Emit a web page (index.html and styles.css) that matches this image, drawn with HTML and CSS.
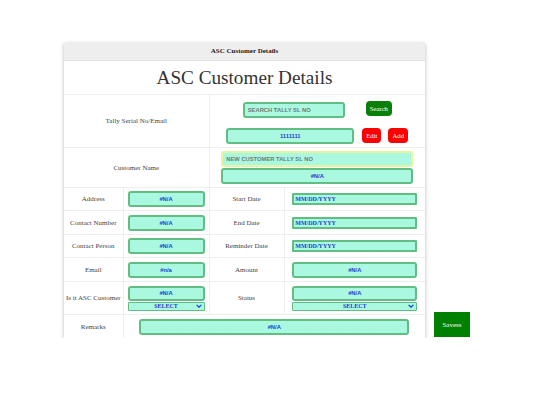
FILE: index.html
```html
<!DOCTYPE html>
<html lang="en">
<head>
<meta charset="utf-8">
<title>ASC Customer Details</title>
<link rel="stylesheet" href="styles.css">
</head>
<body>
<div class="page">
  <div class="card">
    <div class="card-head">ASC Customer Details</div>
    <h1 class="title">ASC Customer Details</h1>
    <table class="form">
      <colgroup>
        <col class="c-label">
        <col class="c-field">
        <col class="c-label2">
        <col class="c-field2">
      </colgroup>
      <tr class="r-tally">
        <td colspan="2" class="lbl">Tally Serial No/Email</td>
        <td colspan="2">
          <div class="tally">
            <div class="line">
              <input class="inp inp-search" placeholder="SEARCH TALLY SL NO">
              <button class="btn btn-green btn-search">Search</button>
            </div>
            <div class="line">
              <input class="inp inp-serial" value="1111111">
              <button class="btn btn-red btn-edit">Edit</button>
              <button class="btn btn-red btn-add">Add</button>
            </div>
          </div>
        </td>
      </tr>
      <tr class="r-cust">
        <td colspan="2" class="lbl">Customer Name</td>
        <td colspan="2">
          <div class="stack stack-cust">
            <input class="inp inp-wide inp-new" placeholder="NEW CUSTOMER TALLY SL NO">
            <input class="inp inp-wide" value="#N/A">
          </div>
        </td>
      </tr>
      <tr class="r-std">
        <td class="lbl">Address</td>
        <td class="fld"><input class="inp inp-left" value="#N/A"></td>
        <td class="lbl">Start Date</td>
        <td class="fld"><input class="date" placeholder="MM/DD/YYYY"></td>
      </tr>
      <tr class="r-std r-tall">
        <td class="lbl">Contact Number</td>
        <td class="fld"><input class="inp inp-left" value="#N/A"></td>
        <td class="lbl">End Date</td>
        <td class="fld"><input class="date" placeholder="MM/DD/YYYY"></td>
      </tr>
      <tr class="r-std">
        <td class="lbl">Contact Person</td>
        <td class="fld"><input class="inp inp-left" value="#N/A"></td>
        <td class="lbl">Reminder Date</td>
        <td class="fld"><input class="date" placeholder="MM/DD/YYYY"></td>
      </tr>
      <tr class="r-std r-tall">
        <td class="lbl">Email</td>
        <td class="fld"><input class="inp inp-left" value="#n/a"></td>
        <td class="lbl">Amount</td>
        <td class="fld"><input class="inp inp-right" value="#N/A"></td>
      </tr>
      <tr class="r-asc">
        <td class="lbl">Is it ASC Customer</td>
        <td class="fld">
          <div class="stack stack-sel">
            <input class="inp inp-left inp-short" value="#N/A">
            <span class="sel-wrap sel-left">
              <select class="sel"><option>SELECT</option></select>
              <svg class="chev" viewBox="0 0 10 6" width="6" height="4"><path d="M1 1 L5 5 L9 1" fill="none" stroke="#1a3fd0" stroke-width="2"/></svg>
            </span>
          </div>
        </td>
        <td class="lbl">Status</td>
        <td class="fld">
          <div class="stack stack-sel">
            <input class="inp inp-right inp-short" value="#N/A">
            <span class="sel-wrap sel-right">
              <select class="sel"><option>SELECT</option></select>
              <svg class="chev" viewBox="0 0 10 6" width="6" height="4"><path d="M1 1 L5 5 L9 1" fill="none" stroke="#1a3fd0" stroke-width="2"/></svg>
            </span>
          </div>
        </td>
      </tr>
      <tr class="r-std r-tall">
        <td class="lbl">Remarks</td>
        <td colspan="3" class="fld"><input class="inp inp-remarks" value="#N/A"></td>
      </tr>
    </table>
  </div>
  <button class="btn-save">Savess</button>
</div>
</body>
</html>
```

FILE: styles.css
```css
html, body {
  margin: 0;
  padding: 0;
  background: #ffffff;
}

body {
  font-family: "Liberation Serif", "Times New Roman", serif;
  color: #333333;
}

.page {
  display: flex;
  align-items: flex-end;
  gap: 9px;
  padding: 43px 0 0 64px;
}

.card {
  width: 361px;
  background: #ffffff;
  box-shadow: 0 1px 4px rgba(0, 0, 0, 0.28);
}

.card-head {
  height: 17px;
  line-height: 17px;
  background: #eeeeee;
  border-bottom: 1px solid #e2e2e2;
  text-align: center;
  font-weight: bold;
  font-size: 7px;
  color: #222222;
}

.title {
  margin: 0;
  height: 33px;
  line-height: 33px;
  text-align: center;
  font-weight: normal;
  font-size: 19.2px;
  color: #333333;
  border-bottom: 1px solid #eeeeee;
}

.form {
  width: 361px;
  table-layout: fixed;
  border-collapse: collapse;
  border-style: hidden;
}

.c-label { width: 59px; }
.c-field { width: 86px; }
.c-label2 { width: 75px; }
.c-field2 { width: 141px; }

.form td {
  border: 1px solid #eeeeee;
  padding: 0;
  vertical-align: middle;
  text-align: center;
}

.lbl {
  font-size: 7px;
  color: #444444;
  white-space: nowrap;
}

.r-tally td { height: 52px; }
.r-cust td { height: 39px; }
.r-std td { height: 22px; }
.r-tall td { height: 23px; }
.r-asc td { height: 32px; }

.tally {
  display: flex;
  flex-direction: column;
  align-items: center;
  gap: 10px;
  padding: 3px 0 0 0;
}

.line {
  display: flex;
  align-items: flex-start;
}

.inp {
  box-sizing: border-box;
  height: 16px;
  margin: 0;
  padding: 0;
  border: 2px solid #62bd83;
  border-radius: 3px;
  background: #aaf8e0;
  font-family: "Liberation Sans", Arial, sans-serif;
  font-weight: bold;
  font-size: 5.8px;
  color: #1a3fd0;
  text-align: center;
  outline: none;
  display: block;
}

.inp::placeholder {
  color: #6f7a75;
  opacity: 1;
}

.inp-search {
  width: 102px;
  text-align: left;
  padding-left: 3px;
}

.inp-serial {
  width: 128px;
}

.btn {
  box-sizing: border-box;
  height: 15px;
  margin: 0;
  padding: 0 4px;
  border: none;
  border-radius: 4px;
  font-family: "Liberation Serif", "Times New Roman", serif;
  font-size: 6.7px;
  color: #ffffff;
}

.btn-green { background: #0a800a; }
.btn-red { background: #ff0000; }

.btn-search {
  margin-left: 21px;
  margin-top: -1px;
  width: 26px;
}

.btn-edit {
  margin-left: 8px;
  width: 19px;
}

.btn-add {
  margin-left: 7px;
  width: 20px;
}

.stack {
  display: flex;
  flex-direction: column;
  align-items: center;
}

.stack-cust {
  gap: 1px;
}

.inp-wide {
  width: 192px;
}

.inp-new {
  border-color: #e3f5a0;
  text-align: left;
  padding-left: 3px;
}

.fld .inp-left { width: 77px; margin: 0 auto; }
.fld .inp-right { width: 125px; margin: 0 auto; }
.inp-short { height: 15px; }

.inp-remarks {
  width: 270px;
  margin: 0 auto;
}

.date {
  box-sizing: border-box;
  display: block;
  width: 125px;
  height: 12px;
  margin: 0 auto;
  padding: 0 0 0 1px;
  border: 2px solid #62bd83;
  border-radius: 1px;
  background: #aaf8e0;
  font-family: "Liberation Serif", "Times New Roman", serif;
  font-weight: bold;
  font-size: 6px;
  color: #1a3fd0;
  outline: none;
}

.date::placeholder {
  color: #1a3fd0;
  opacity: 1;
}

.stack-sel {
  gap: 1px;
}

.sel-wrap {
  position: relative;
  display: block;
}

.sel-left { width: 77px; }
.sel-right { width: 125px; }

.sel {
  box-sizing: border-box;
  display: block;
  width: 100%;
  height: 9px;
  margin: 0;
  padding: 0;
  border: 1px solid #62bd83;
  border-radius: 1px;
  background: #aaf8e0;
  appearance: none;
  -webkit-appearance: none;
  font-family: "Liberation Serif", "Times New Roman", serif;
  font-weight: bold;
  font-size: 6px;
  line-height: 7px;
  color: #1a3fd0;
  text-align: center;
  text-align-last: center;
  outline: none;
}

.chev {
  position: absolute;
  right: 3px;
  top: 2.5px;
  pointer-events: none;
}

.btn-save {
  width: 36px;
  height: 25px;
  margin: 0 0 1px 0;
  padding: 0;
  border: none;
  background: #008000;
  color: #ffffff;
  font-family: "Liberation Serif", "Times New Roman", serif;
  font-size: 7px;
}
```
